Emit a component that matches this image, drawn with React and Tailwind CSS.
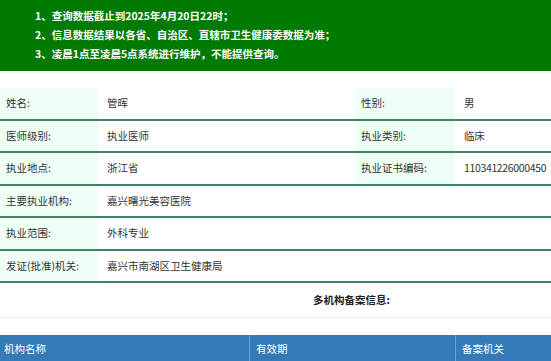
import React from 'react';

const notices = [
  '1、查询数据截止到2025年4月20日22时；',
  '2、信息数据结果以各省、自治区、直辖市卫生健康委数据为准；',
  '3、凌晨1点至凌晨5点系统进行维护，不能提供查询。',
];

const pairRows = [
  ['姓名:', '管晖', '性别:', '男'],
  ['医师级别:', '执业医师', '执业类别:', '临床'],
  ['执业地点:', '浙江省', '执业证书编码:', '110341226000450'],
];

const wideRows = [
  ['主要执业机构:', '嘉兴曙光美容医院'],
  ['执业范围:', '外科专业'],
  ['发证(批准)机关:', '嘉兴市南湖区卫生健康局'],
];

const Label = ({ children, className = '' }) => (
  <div className={`flex items-center bg-[#effff6] px-[6px] ${className}`}>{children}</div>
);

const App = () => {
  return (
    <div
      className="w-[551px] h-[361px] overflow-hidden bg-white text-[10.5px] text-[#333]"
      style={{ fontFamily: '"Noto Sans CJK SC", "Noto Sans", sans-serif' }}
    >
      <div className="h-[71px] bg-[#017a01] pl-[35px] pt-[6px] font-bold leading-[19px] text-white">
        {notices.map((n) => (
          <div key={n}>{n}</div>
        ))}
      </div>

      <div className="mt-[17px]">
        {pairRows.map(([l1, v1, l2, v2]) => (
          <div key={l1} className="flex h-[32.5px] border-b-2 border-[#3d8763]">
            <Label className="w-[98px]">{l1}</Label>
            <div className="flex w-[257px] items-center pl-[9px]">{v1}</div>
            <Label className="w-[100px]">{l2}</Label>
            <div className="flex flex-1 items-center whitespace-nowrap pl-[9px] tracking-[-0.35px]">{v2}</div>
          </div>
        ))}
        {wideRows.map(([l, v]) => (
          <div key={l} className="flex h-[32.5px] border-b-2 border-[#3d8763]">
            <Label className="w-[98px]">{l}</Label>
            <div className="flex flex-1 items-center pl-[9px]">{v}</div>
          </div>
        ))}
      </div>

      <div className="flex h-[35px] items-center border-b border-[#eeeeee] pl-[313px] font-bold text-[#222]">
        多机构备案信息:
      </div>

      <div className="mt-[17px] flex h-[28px] bg-[#337ab7] text-white">
        <div className="flex w-[250px] items-center border-r border-[#6a9fcf] pl-[4px]">机构名称</div>
        <div className="flex w-[206px] items-center border-r border-[#6a9fcf] pl-[6px]">有效期</div>
        <div className="flex flex-1 items-center pl-[6px]">备案机关</div>
      </div>
    </div>
  );
};

export default App;
